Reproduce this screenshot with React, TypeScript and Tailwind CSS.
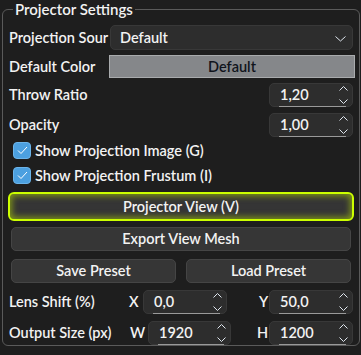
import { useState } from "react";

const font = { fontFamily: 'Lato, "Noto Sans", sans-serif' };

function ChevronDown({ className = "" }: { className?: string }) {
  return (
    <svg width="11" height="6" viewBox="0 0 11 6" className={className}>
      <path d="M0.5 0.5 L5.5 5 L10.5 0.5" fill="none" stroke="#dfe6ee" strokeWidth="1" />
    </svg>
  );
}

function ChevronUp({ className = "" }: { className?: string }) {
  return (
    <svg width="9" height="5" viewBox="0 0 9 5" className={className}>
      <path d="M0.5 4.5 L4.5 0.5 L8.5 4.5" fill="none" stroke="#dfe6ee" strokeWidth="1" />
    </svg>
  );
}

function SpinBox({ value, className = "" }: { value: string; className?: string }) {
  return (
    <div
      className={`relative flex h-[24px] items-center rounded-[5px] border border-[#383838] bg-[#2d2d2d] ${className}`}
    >
      <span className="pl-[10px] text-[14.5px] text-[#f2f2f2]">{value}</span>
      <div className="absolute right-[4px] top-[2px] flex flex-col items-center gap-[8px]">
        <ChevronUp />
        <svg width="9" height="5" viewBox="0 0 9 5">
          <path d="M0.5 0.5 L4.5 4.5 L8.5 0.5" fill="none" stroke="#dfe6ee" strokeWidth="1" />
        </svg>
      </div>
      <div className="absolute bottom-[-1px] left-[9px] right-[6px] h-px bg-[#9a9a9a]" />
    </div>
  );
}

function CheckRow({ label }: { label: string }) {
  const [on, setOn] = useState(true);
  return (
    <button onClick={() => setOn(!on)} className="flex h-[25px] items-center gap-[4px] pl-[4px]">
      <span
        className={`flex h-[17px] w-[18px] items-center justify-center rounded-[4px] border ${
          on ? "border-[#6cb4ea] bg-[#4ca0e0]" : "border-[#7a7a7a] bg-[#2d2d2d]"
        }`}
      >
        {on && (
          <svg width="11" height="9" viewBox="0 0 11 9">
            <path d="M1 4.5 L4 7.5 L10 1" fill="none" stroke="#ffffff" strokeWidth="1" />
          </svg>
        )}
      </span>
      <span className="text-[14.5px] text-[#f2f2f2]">{label}</span>
    </button>
  );
}

function PushButton({ label, className = "" }: { label: string; className?: string }) {
  return (
    <button
      className={`flex h-[24px] items-center justify-center rounded-[5px] border border-[#454545] bg-[#363636] text-[14.5px] text-[#f2f2f2] ${className}`}
    >
      {label}
    </button>
  );
}

export default function App() {
  return (
    <div className="h-[355px] w-[361px] bg-[#1e1e1e] pl-[2px] pr-[3px] font-semibold" style={font}>
      <fieldset className="h-[346px] rounded-[6px] border border-[#5a5a5a] px-[6px]">
        <legend className="ml-[4px] px-[2px] text-[15px] leading-[18px] text-[#f2f2f2]">
          Projector Settings
        </legend>

        <div className="mt-[7px] flex h-[25px] items-center">
          <span className="w-[101px] whitespace-nowrap text-[14.5px] text-[#f2f2f2]">Projection Sour</span>
          <div className="relative flex h-[25px] flex-1 items-center rounded-[5px] border border-[#383838] bg-[#2d2d2d]">
            <span className="pl-[9px] text-[14.5px] text-[#f2f2f2]">Default</span>
            <ChevronDown className="absolute right-[6px] top-[10px]" />
          </div>
        </div>

        <div className="mt-[5px] flex h-[23px] items-center">
          <span className="w-[100px] text-[14.5px] text-[#f2f2f2]">Default Color</span>
          <div className="mr-[-2px] flex h-[23px] flex-1 items-center justify-center border border-[#a9abad] bg-[#85878a] text-[14.5px] text-[#10141c]">
            Default
          </div>
        </div>

        <div className="mt-[5px] flex h-[24px] items-center justify-between">
          <span className="text-[14.5px] text-[#f2f2f2]">Throw Ratio</span>
          <SpinBox value="1,20" className="w-[84px]" />
        </div>

        <div className="mt-[6px] flex h-[24px] items-center justify-between">
          <span className="text-[14.5px] text-[#f2f2f2]">Opacity</span>
          <SpinBox value="1,00" className="w-[84px]" />
        </div>

        <div className="mt-[1px] flex flex-col">
          <CheckRow label="Show Projection Image (G)" />
          <CheckRow label="Show Projection Frustum (I)" />
        </div>

        <button className="mt-[4px] flex h-[29px] w-[calc(100%+2px)] -ml-[1px] items-center justify-center rounded-[6px] border-2 border-[#ccff00] bg-[#353535] text-[14.5px] text-[#f2f2f2] shadow-[inset_0_0_6px_2px_rgba(190,230,0,0.55)]">
          Projector View (V)
        </button>

        <PushButton label="Export View Mesh" className="mx-[2px] mt-[6px] h-[24px] w-[calc(100%-4px)]" />

        <div className="mx-[2px] mt-[8px] flex gap-[10px]">
          <PushButton label="Save Preset" className="flex-1" />
          <PushButton label="Load Preset" className="flex-1" />
        </div>

        <div className="mt-[7px] flex h-[24px] items-center">
          <span className="w-[120px] text-[14.5px] text-[#f2f2f2]">Lens Shift (%)</span>
          <span className="w-[14px] text-[14.5px] text-[#f2f2f2]">X</span>
          <SpinBox value="0,0" className="w-[84px]" />
          <span className="ml-[32px] w-[10px] text-[14.5px] text-[#f2f2f2]">Y</span>
          <SpinBox value="50,0" className="ml-auto w-[84px]" />
        </div>

        <div className="mt-[7px] flex h-[24px] items-center">
          <span className="w-[121px] text-[14.5px] text-[#f2f2f2]">Output Size (px)</span>
          <span className="w-[18px] text-[14.5px] text-[#f2f2f2]">W</span>
          <SpinBox value="1920" className="w-[83px]" />
          <span className="ml-[26px] w-[10px] text-[14.5px] text-[#f2f2f2]">H</span>
          <SpinBox value="1200" className="ml-auto w-[84px]" />
        </div>
      </fieldset>
    </div>
  );
}
